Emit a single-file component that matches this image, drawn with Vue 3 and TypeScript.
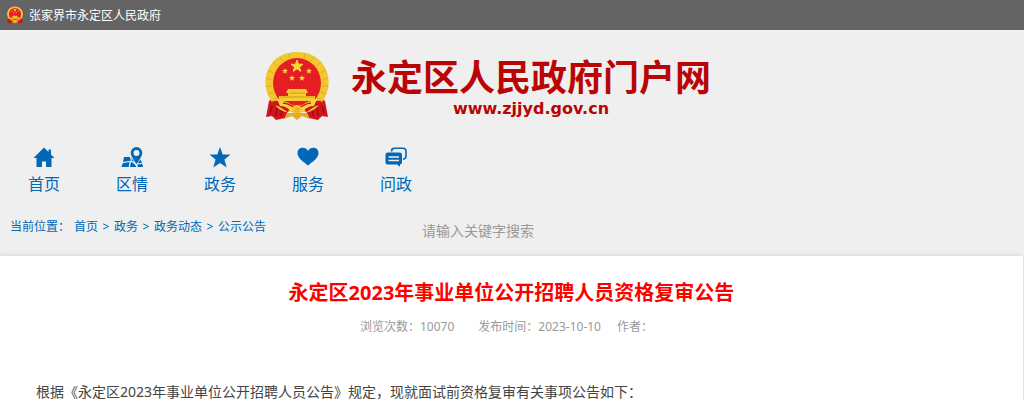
<script setup lang="ts">
import { ref } from 'vue'

type IconName = 'home' | 'map' | 'star' | 'heart' | 'chat'

const navItems: { label: string; icon: IconName }[] = [
  { label: '首页', icon: 'home' },
  { label: '区情', icon: 'map' },
  { label: '政务', icon: 'star' },
  { label: '服务', icon: 'heart' },
  { label: '问政', icon: 'chat' },
]
const crumbs: string[] = ['首页', '政务', '政务动态', '公示公告']
const keyword = ref('')
</script>

<template>
  <div class="page">
    <svg class="defs" aria-hidden="true">
      <symbol id="emblem" viewBox="0 0 64 70">
        <path d="M10 46 4 50 1 66l6-1 4 4 9-2 4-10h16l4 10 9 2 4-4 6 1-3-16-6-4z" fill="#d5131c" />
        <path d="M7 55 5 62M12 56l-1 9M17 58l-1 7M57 55l2 7M52 56l1 9M47 58l1 7" stroke="#8f0d16" stroke-width="1.5" fill="none" />
        <path d="M32 1C20 1 10 6 5 15-1 24-1 37 4 46c3 7 9 12 16 15h24c7-3 13-8 16-15 5-9 5-22-1-31C54 6 44 1 32 1z" fill="#f2c72f" />
        <path d="M3 19l5 3M1 27l6 2M1 35l6 0M3 43l5-2M7 50l5-4M8 11l4 4M15 6l3 4M61 19l-5 3M63 27l-6 2M63 35l-6 0M61 43l-5-2M57 50l-5-4M56 11l-4 4M49 6l-3 4M24 3l1 4M40 3l-1 4" stroke="#dfaa22" stroke-width="1" fill="none" />
        <ellipse cx="32" cy="32" rx="24" ry="25" fill="#e61e24" />
        <path d="m32 9 1.500 4.300h4.500l-3.600 2.700 1.400 4.400-3.800-2.700-3.800 2.700 1.400-4.400-3.600-2.700h4.500z" fill="#fbd93c" stroke="#fbd93c" />
        <path id="small-star" d="m20 17 .8 2.100h2.200l-1.700 1.400.6 2.200-1.900-1.300-1.900 1.300.6-2.200-1.700-1.400h2.200z" fill="#fbd93c" />
        <use href="#small-star" x="24" />
        <use href="#small-star" x="7" y="7" />
        <use href="#small-star" x="17" y="7" />
        <path d="M23 38h18l2 4h-2v3h9v5H14v-5h9v-3h-2z" fill="#f5cc32" />
        <path d="M24 42h16M15 46h34" stroke="#d99a17" stroke-width="1" />
        <path d="M8 53c6-3 10 3 16 6M56 53c-6-3-10 3-16 6" stroke="#d5131c" stroke-width="5" fill="none" />
        <path d="M12 48c5 2 9 2 13 5l7 3 7-3c4-3 8-3 13-5l-3 7c-5 0-8 2-11 5H26c-3-3-6-5-11-5z" fill="#f8d542" />
        <path d="M18 52c5 0 8 3 11 4M46 52c-5 0-8 3-11 4" stroke="#d5131c" stroke-width="1.500" fill="none" />
        <circle cx="32" cy="59" r="5" fill="#f2c72f" />
        <circle cx="32" cy="59" r="2.500" fill="#e8b42a" />
        <path d="M22 62h20l3 6-8-3-5 4-5-4-8 3z" fill="#e3ac22" />
      </symbol>
    </svg>

    <div class="topbar">
      <svg class="topbar-emblem" aria-hidden="true"><use href="#emblem" /></svg>
      <span>张家界市永定区人民政府</span>
    </div>

    <header class="banner">
      <svg class="banner-emblem" aria-hidden="true"><use href="#emblem" /></svg>
      <div class="brand">
        <div class="brand-name">永定区人民政府门户网</div>
        <div class="brand-url">www.zjjyd.gov.cn</div>
      </div>
    </header>

    <nav class="nav">
      <a v-for="item in navItems" :key="item.label" href="#">
        <svg viewBox="0 0 22 22" aria-hidden="true">
          <path v-if="item.icon === 'home'" d="M11 .5 .5 11h3v9h5.500v-5.500h4V20h5.500v-9h3L18 7.500V2.500h-2.500V5z" />
          <template v-else-if="item.icon === 'map'">
            <path d="M3 10h6l.8 3.800L2 15zM1.700 16.200l6.800-1.100-.8 4.900H.5zM10 14.800l3.500 2.300 2 2.900H9zM10.500 11l2.500 4-2.300-1.300zM19.500 12.500l1.500 3.200-4.500.8zM16 17.800l5.300-1 .7 3.200h-4.800z" />
            <path fill-rule="evenodd" d="M15.500 0a5.800 5.800 0 0 0-5.800 5.800c0 4 5.800 11.200 5.800 11.200s5.800-7.200 5.800-11.200A5.800 5.800 0 0 0 15.500 0zm0 3a3 3 0 1 1 0 6 3 3 0 0 1 0-6z" />
          </template>
          <path v-else-if="item.icon === 'star'" d="m11 0 2.700 7.500h7.800l-6.100 4.900L17.700 20.500 11 16l-6.700 4.500 2.300-8.100L.5 7.500h7.800z" />
          <path v-else-if="item.icon === 'heart'" d="M11 18.500C7 15 .5 11.500.5 6 .5 2.500 3 .8 5.700.8c2.400 0 4.200 1.200 5.300 3.200C12.100 2 13.900.8 16.300.8c2.700 0 5.200 1.700 5.200 5.200 0 5.500-6.500 9-10.500 12.500z" />
          <template v-else>
            <path d="M6.500 4.500C6.500 2 7.500 1.200 9.500 1.200H18c2 0 3 1 3 3V9c0 2-1 3-3 3.200" fill="none" stroke="currentColor" stroke-width="1.600" />
            <path fill-rule="evenodd" d="M3 5.500h11.500c1.700 0 2.500.8 2.500 2.500v7c0 1.500-.8 2.500-2 2.500v2.300L12 17.500H3C1.300 17.500.5 16.700.5 15V8c0-1.700.8-2.500 2.500-2.500zm.5 3.700v1.600h10.500V9.200zm0 3.500v1.600h10.500v-1.600z" />
          </template>
        </svg>
        <span>{{ item.label }}</span>
      </a>
    </nav>

    <div class="tools">
      <div class="crumbs">
        <span class="crumbs-label">当前位置：</span>
        <template v-for="(crumb, i) in crumbs" :key="crumb">
          <span v-if="i > 0" class="crumbs-arrow">&gt;</span>
          <a href="#">{{ crumb }}</a>
        </template>
      </div>
      <form class="search" @submit.prevent>
        <input v-model="keyword" type="text" aria-label="请输入关键字搜索" placeholder="请输入关键字搜索" />
      </form>
    </div>

    <main class="article">
      <h1>永定区2023年事业单位公开招聘人员资格复审公告</h1>
      <div class="meta">
        <span class="views">浏览次数：10070</span>
        <span class="date">发布时间：2023-10-10</span>
        <span>作者：</span>
      </div>
      <p>根据《永定区2023年事业单位公开招聘人员公告》规定，现就面试前资格复审有关事项公告如下：</p>
    </main>
  </div>
</template>

<style>
body {
  background: #efefef;
}
</style>

<style scoped>
.page {
  font-family: "Noto Sans", "Noto Sans CJK SC", sans-serif;
  font-size: 12px;
  color: #444;
}
.defs {
  position: absolute;
  width: 0;
  height: 0;
}
a {
  color: inherit;
  text-decoration: none;
}
.topbar {
  display: flex;
  align-items: center;
  gap: 6px;
  height: 30px;
  padding-left: 7px;
  background: #646464;
  color: #fff;
}
.topbar-emblem {
  width: 16px;
  height: 18px;
}
.banner {
  display: flex;
  justify-content: center;
  gap: 22px;
  height: 86px;
  padding: 21px 48px 0 0;
}
.banner-emblem {
  width: 64px;
  height: 70px;
}
.brand {
  padding-top: 3px;
  color: #b90505;
  font-weight: bold;
  text-align: center;
}
.brand-name {
  font-family: "Noto Sans CJK SC", sans-serif;
  font-size: 36px;
  line-height: 42px;
}
.brand-url {
  font-family: "DejaVu Sans", sans-serif;
  font-size: 16px;
  line-height: 26px;
}
.nav {
  display: flex;
  padding-top: 10px;
  color: #0068b7;
}
.nav a {
  display: flex;
  flex-direction: column;
  align-items: center;
  width: 88px;
  font-size: 16px;
  line-height: 30px;
}
.nav svg {
  width: 22px;
  height: 22px;
  fill: currentColor;
}
.tools {
  display: flex;
  height: 57px;
}
.crumbs {
  display: flex;
  flex: 0 0 411px;
  padding: 16px 0 0 10px;
  box-sizing: border-box;
  line-height: 24px;
  color: #0068b7;
}
.crumbs-label {
  width: 64px;
}
.crumbs-arrow {
  width: 16px;
  text-align: center;
}
.search {
  flex: 1;
  padding-top: 14px;
}
.search input {
  width: 100%;
  height: 34px;
  padding: 0 11px;
  box-sizing: border-box;
  border: 0;
  outline: 0;
  background: transparent;
  font: inherit;
  font-size: 14px;
}
.search input::placeholder {
  color: #999;
}
.article {
  margin-right: 1px;
  padding: 21px 8px 0;
  background: #fff;
  box-shadow: 0 0 4px #ccc;
}
h1 {
  margin: 0;
  font-size: 20px;
  line-height: 32px;
  text-align: center;
  color: #f00;
}
.meta {
  display: flex;
  justify-content: center;
  padding: 6px 10px 0 0;
  line-height: 24px;
  color: #999;
}
.views {
  margin-right: 24px;
}
.date {
  margin-right: 16px;
}
p {
  margin: 45px 0 0;
  font-size: 14px;
  line-height: 16px;
  text-indent: 2em;
}
</style>
